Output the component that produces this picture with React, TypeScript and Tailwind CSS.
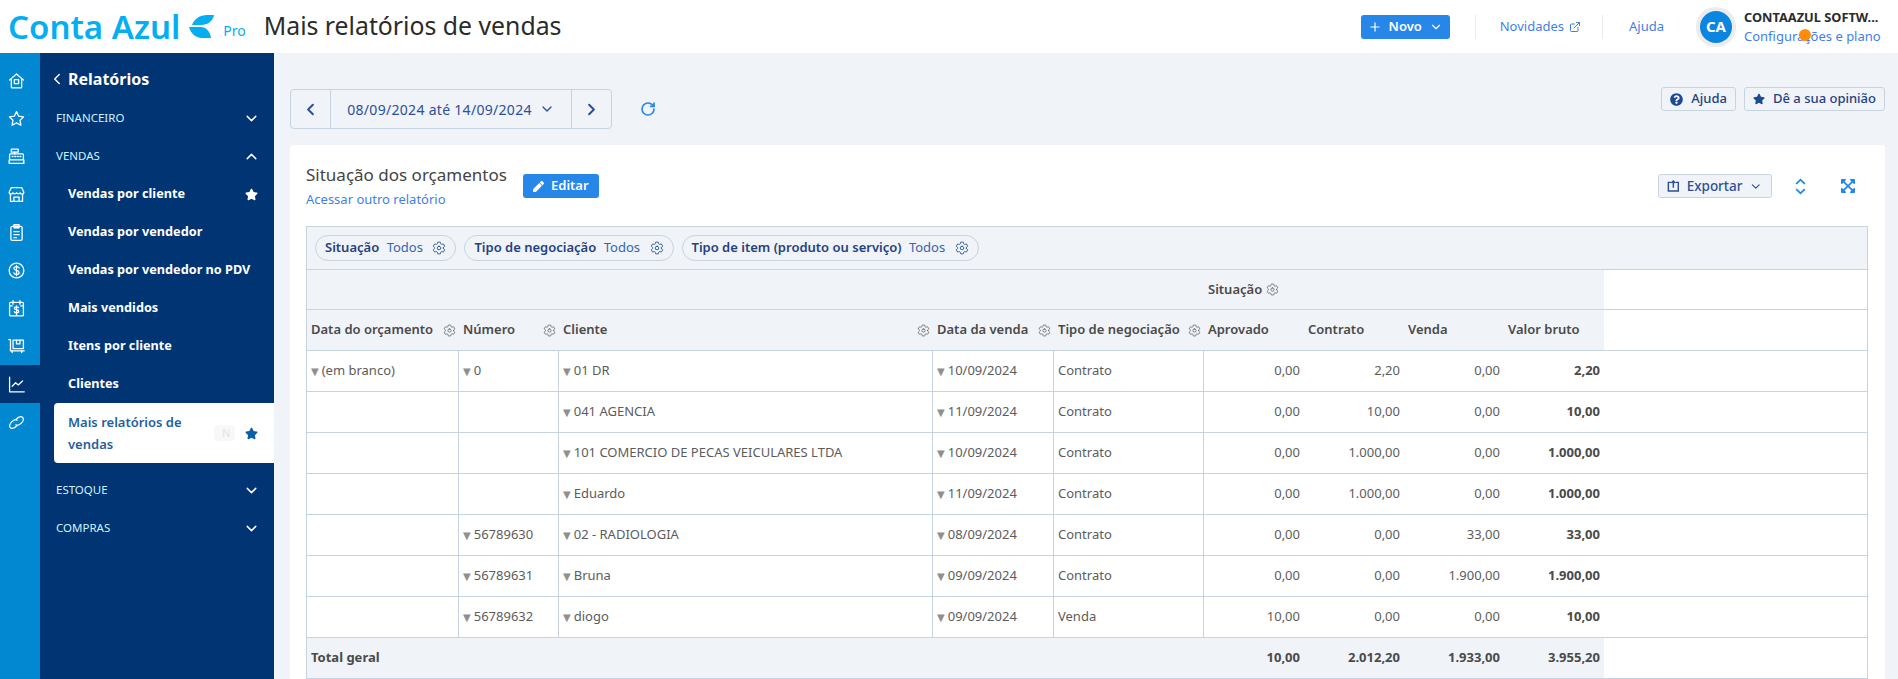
import { ChevronDown, ChevronUp, ChevronLeft, ChevronRight, Plus, RotateCw, ExternalLink } from 'lucide-react'
import { FaQuestionCircle, FaStar, FaPen, FaExpandArrowsAlt } from 'react-icons/fa'
import { IoSettingsOutline } from 'react-icons/io5'

const railIcons = [
  <g><path d="M3 10.5 11 3.5l8 7" /><path d="M5 9.5V18.5a1 1 0 0 0 1 1h10a1 1 0 0 0 1-1V9.5" /><rect x="8.5" y="10" width="5" height="4.5" /></g>,
  <path d="M11 3l2.5 5.3 5.7.8-4.1 4 1 5.7-5.1-2.7-5.1 2.7 1-5.7-4.1-4 5.7-.8z" />,
  <g><rect x="5" y="2.5" width="8" height="3.5" /><path d="M9 6v2" /><rect x="3" y="8" width="16" height="7" rx="1" /><path d="M6 11h1M9 11h1M12 11h1M15 11h1" /><path d="M2.5 15v4h17v-4" /></g>,
  <g><path d="M5 3h12l2.5 5.5a2.2 2.2 0 0 1-4.3.5 2.4 2.4 0 0 1-4.2 0 2.4 2.4 0 0 1-4.2 0 2.2 2.2 0 0 1-4.3-.5z" /><path d="M4 11v8h14v-8" /><path d="M8 19v-5h6v5" /></g>,
  <g><rect x="4.5" y="4" width="13" height="16" rx="1.5" /><rect x="8" y="2" width="6" height="3.5" /><path d="M8 10h6M8 13.5h6M8 17h3" /></g>,
  <g><circle cx="11" cy="11" r="8.5" /><path d="M14 8c-.5-1-1.500-1.500-3-1.500-1.700 0-3 .8-3 2.200 0 3 6 1.500 6 4.500 0 1.400-1.300 2.300-3 2.300-1.500 0-2.600-.6-3-1.700M11 5v12" /></g>,
  <g><rect x="3" y="4" width="16" height="15.500" rx="1" /><path d="M7 2v4M15 2v4M3 8h3M16 8h3" /><path d="M13.500 10c-.4-.7-1.300-1-2.500-1-1.400 0-2.500.6-2.500 1.700 0 2.300 5 1.100 5 3.500 0 1.100-1.100 1.800-2.500 1.800-1.200 0-2.100-.4-2.500-1.300M11 8v10" /></g>,
  <g><path d="M2 3h2v13h16" /><rect x="7" y="3.500" width="12" height="10" /><path d="M11 3.500v4.500h4V3.500" /><path d="M6 16v2M17 16v2" /></g>,
  <g><path d="M3 2.500V19.500h17" /><path d="M6 13l4-4 3 2.500 5-4.500" /></g>,
  <g><path d="M10.500 7.500C13 4.500 16 3.500 18 5c2 1.700.8 4.800-1.700 7-2.300 2-4.600 2.800-6 1.700" /><path d="M11.500 14.500C9 17.500 6 18.500 4 17c-2-1.700-.8-4.800 1.700-7 2.300-2 4.600-2.800 6-1.700" /></g>,
]

const rows = [
  { d: '(em branco)', n: '0', c: '01 DR', dv: '10/09/2024', t: 'Contrato', v: ['0,00', '2,20', '0,00', '2,20'] },
  { c: '041 AGENCIA', dv: '11/09/2024', t: 'Contrato', v: ['0,00', '10,00', '0,00', '10,00'] },
  { c: '101 COMERCIO DE PECAS VEICULARES LTDA', dv: '10/09/2024', t: 'Contrato', v: ['0,00', '1.000,00', '0,00', '1.000,00'] },
  { c: 'Eduardo', dv: '11/09/2024', t: 'Contrato', v: ['0,00', '1.000,00', '0,00', '1.000,00'] },
  { n: '56789630', c: '02 - RADIOLOGIA', dv: '08/09/2024', t: 'Contrato', v: ['0,00', '0,00', '33,00', '33,00'] },
  { n: '56789631', c: 'Bruna', dv: '09/09/2024', t: 'Contrato', v: ['0,00', '0,00', '1.900,00', '1.900,00'] },
  { n: '56789632', c: 'diogo', dv: '09/09/2024', t: 'Venda', v: ['10,00', '0,00', '0,00', '10,00'] },
]

const gridCols = 'grid grid-cols-[152px_100px_374px_121px_150px_100px_100px_100px_100px_1fr]'

function Tri() {
  return <span className="mr-[3px] text-[10px] text-[#8f8f8f] font-['DejaVu_Sans',sans-serif]">▼</span>
}

function Cell({ value, tri = true }: { value?: string; tri?: boolean }) {
  return (
    <div className="flex items-center pl-1 border-r border-[#c8d3e0] truncate">
      {value && tri && <Tri />}
      {value}
    </div>
  )
}

function HeadCell({ label }: { label: string }) {
  return (
    <div className="flex items-center justify-between pl-1 pr-[3px]">
      <span>{label}</span>
      <IoSettingsOutline size={13} className="text-[#666]" />
    </div>
  )
}

function Pill({ label }: { label: string }) {
  return (
    <div className="flex items-center h-[26px] px-[9px] gap-[7.500px] rounded-full border border-[#c8d3e0] text-[13px]">
      <span className="font-semibold text-[#24427f]">{label}</span>
      <span className="text-[#3566ae]">Todos</span>
      <IoSettingsOutline size={14} className="text-[#24518f] ml-[2px]" />
    </div>
  )
}

function NavGroup({ label, open }: { label: string; open?: boolean }) {
  return (
    <div className="flex items-center justify-between h-[38px] pl-4 pr-[14px] text-[11.5px] text-[#cdf3ff]">
      <span>{label}</span>
      {open ? <ChevronUp size={17} className="text-white" /> : <ChevronDown size={17} className="text-white" />}
    </div>
  )
}

function NavItem({ label, star }: { label: string; star?: boolean }) {
  return (
    <div className="flex items-center justify-between h-[38px] pl-7 pr-4 text-[12.7px] font-bold text-white">
      <span>{label}</span>
      {star && <FaStar size={13} />}
    </div>
  )
}

export default function App() {
  return (
    <div className="h-[679px] w-[1898px] overflow-hidden flex flex-col bg-[#f0f3f8] font-['Noto_Sans',sans-serif]">
      <header className="relative h-[53px] shrink-0 bg-white flex items-center">
        <span className="ml-2 mb-px text-[33px] leading-none font-semibold text-[#04aef1]">Conta Azul</span>
        <svg viewBox="0 0 25 23" className="ml-[9px] w-[25px] h-[23px] fill-[#04aef1]">
          <path d="M25 0C24 6 19 10 12 10H3C5 4 11 0 18 0Z" />
          <path d="M0 12H12C17 12 21 16 22 23H13C7 23 2 19 0 12Z" />
        </svg>
        <span className="ml-[9px] mt-[9px] text-[14px] leading-none text-[#04aef1]">Pro</span>
        <h1 className="ml-[18px] mb-[3px] text-[24.800px] leading-none text-[#2b2b2b]">Mais relatórios de vendas</h1>
        <button className="ml-auto flex items-center justify-center gap-[7px] w-[89px] h-6 rounded-[3px] bg-[#2687e9] text-[13px] font-semibold text-white">
          <Plus size={14} />
          Novo
          <ChevronDown size={14} />
        </button>
        <div className="ml-[25px] w-px h-6 bg-[#e8ecf1]" />
        <a className="ml-6 flex items-center gap-[5px] text-[13px] text-[#3f7fe8]">
          Novidades <ExternalLink size={12} />
        </a>
        <div className="ml-[21px] w-px h-6 bg-[#e8ecf1]" />
        <a className="ml-[26px] text-[13px] text-[#3f7fe8]">Ajuda</a>
        <div className="ml-8 flex items-center justify-center w-10 h-10 rounded-full bg-[#ececec]">
          <div className="flex items-center justify-center w-8 h-8 rounded-full bg-[#0a85e0] text-[15px] font-bold text-white">CA</div>
        </div>
        <div className="ml-2 w-[154px]">
          <div className="text-[12.800px] leading-[18px] font-bold text-[#2b2b2b] truncate">CONTAAZUL SOFTW...</div>
          <div className="text-[13px] leading-[20px] text-[#3f7fe8]">Configurações e plano</div>
        </div>
        <span className="absolute left-[1799px] top-[29px] w-3 h-3 rounded-full bg-[#ff8c0a]" />
      </header>

      <div className="flex flex-1 min-h-0">
        <aside className="w-10 shrink-0 bg-[#0288d1] pt-[8px]">
          {railIcons.map((icon, i) => (
            <div key={i} className={`flex items-center justify-center h-[38px] pr-2 ${i === 8 ? 'bg-[#003473]' : ''}`}>
              <svg viewBox="0 0 22 22" fill="none" stroke="white" strokeWidth="1.500" strokeLinejoin="round" strokeLinecap="round" className="w-[19px] h-[19px]">
                {icon}
              </svg>
            </div>
          ))}
        </aside>

        <nav className="w-[234px] shrink-0 bg-[#003473]">
          <div className="flex items-center h-[46px] pt-[6px] pl-[8px] text-white">
            <ChevronLeft size={18} />
            <span className="ml-[2px] text-[16px] font-bold">Relatórios</span>
          </div>
          <NavGroup label="FINANCEIRO" />
          <NavGroup label="VENDAS" open />
          <NavItem label="Vendas por cliente" star />
          <NavItem label="Vendas por vendedor" />
          <NavItem label="Vendas por vendedor no PDV" />
          <NavItem label="Mais vendidos" />
          <NavItem label="Itens por cliente" />
          <NavItem label="Clientes" />
          <div className="ml-[14px] flex items-center justify-between h-[60px] pl-[14px] pr-4 rounded-l bg-white text-[13px] leading-[22px] font-semibold text-[#1f5f9f]">
            <span className="w-[130px]">Mais relatórios de vendas</span>
            <span className="ml-auto mr-[10px] w-[21px] h-4 pl-2 rounded bg-[#f8f8f8] text-[11px] leading-4 font-normal text-[#e4e4e4] overflow-hidden">N</span>
            <FaStar size={13} className="text-[#0b5fa8]" />
          </div>
          <div className="h-2" />
          <NavGroup label="ESTOQUE" />
          <NavGroup label="COMPRAS" />
        </nav>

        <main className="flex-1 min-w-0 pl-4 pr-[13px] pt-[34px]">
          <div className="flex items-start justify-between h-[42px] mb-4">
            <div className="mt-[2px] flex items-center h-10 rounded border border-[#c8d3e0] text-[#2b4f9b]">
              <div className="flex items-center justify-center w-10 h-full border-r border-[#c8d3e0]">
                <ChevronLeft size={19} strokeWidth={2.5} />
              </div>
              <div className="flex items-center justify-center gap-[7px] w-[240px] h-full text-[14px] tracking-[0.3px]">
                08/09/2024 até 14/09/2024
                <ChevronDown size={16} />
              </div>
              <div className="flex items-center justify-center w-10 h-full border-l border-[#c8d3e0]">
                <ChevronRight size={19} strokeWidth={2.5} />
              </div>
              <RotateCw size={16} strokeWidth={2.5} className="absolute left-[640px] text-[#2687e9]" />
            </div>
            <div className="flex items-center gap-2">
              <button className="flex items-center gap-2 h-6 px-2 rounded-[3px] border border-[#c8d3e0] text-[13px] font-medium text-[#24427f]">
                <FaQuestionCircle size={13} className="text-[#1c4a95]" />
                Ajuda
              </button>
              <button className="flex items-center gap-2 h-6 px-2 rounded-[3px] border border-[#c8d3e0] text-[13px] font-medium text-[#24427f]">
                <FaStar size={12} className="text-[#1c4a95]" />
                Dê a sua opinião
              </button>
            </div>
          </div>

          <section className="rounded-t bg-white h-[560px] pl-4 pr-[17px]">
            <div className="flex items-start h-[81px]">
              <div className="pt-[18px]">
                <h2 className="text-[17px] leading-[24px] text-[#444]">Situação dos orçamentos</h2>
                <a className="block mt-[2px] text-[13px] leading-[20px] text-[#3f7fe8]">Acessar outro relatório</a>
              </div>
              <button className="mt-[29px] ml-4 flex items-center justify-center gap-[7px] w-[76px] h-6 rounded-[3px] bg-[#2687e9] text-[13px] font-semibold text-white">
                <FaPen size={11} />
                Editar
              </button>
              <button className="mt-[29px] ml-auto flex items-center gap-[7px] w-[114px] h-6 px-2 rounded-[3px] border border-[#c8d3e0] bg-[#f0f3f8] text-[13.500px] font-medium text-[#2b4f9b]">
                <svg viewBox="0 0 14 14" fill="none" stroke="currentColor" strokeWidth="1.600" className="w-[14px] h-[14px]">
                  <path d="M4.500 3H1.500v9.500h11V3H9.500" />
                  <path d="M7 9V1.500M4.800 3.700 7 1.500l2.200 2.200" />
                </svg>
                Exportar
                <ChevronDown size={15} />
              </button>
              <svg viewBox="0 0 14 20" fill="none" stroke="#2687e9" strokeWidth="2.200" className="mt-[33px] ml-[22px] w-[13px] h-[17px]">
                <path d="M2 7 7 2l5 5M2 13l5 5 5-5" />
              </svg>
              <FaExpandArrowsAlt size={16} className="mt-[33px] ml-[33px] mr-[12px] text-[#2687e9]" />
            </div>

            <div className="border-x border-t border-[#c8d3e0] text-[13px] text-[#5c5c5c]">
              <div className="flex items-center gap-2 h-[43px] pl-2 bg-[#f0f3f8] border-b border-[#c8d3e0]">
                <Pill label="Situação" />
                <Pill label="Tipo de negociação" />
                <Pill label="Tipo de item (produto ou serviço)" />
              </div>

              <div className={`${gridCols} h-[40px] border-b border-[#c8d3e0] font-semibold text-[#4a4a4a]`}>
                <div className="col-span-5 bg-[#f0f3f8]" />
                <div className="col-span-4 flex items-center gap-1 pl-1 bg-[#f0f3f8]">
                  Situação <IoSettingsOutline size={13} className="text-[#666]" />
                </div>
              </div>

              <div className={`${gridCols} h-[41px] border-b border-[#c8d3e0] font-semibold text-[#4a4a4a]`}>
                <div className="col-span-9 grid grid-cols-subgrid bg-[#f0f3f8]">
                  <HeadCell label="Data do orçamento" />
                  <HeadCell label="Número" />
                  <HeadCell label="Cliente" />
                  <HeadCell label="Data da venda" />
                  <HeadCell label="Tipo de negociação" />
                  {['Aprovado', 'Contrato', 'Venda', 'Valor bruto'].map(h => (
                    <div key={h} className="flex items-center pl-1">{h}</div>
                  ))}
                </div>
              </div>

              {rows.map((r, i) => (
                <div key={i} className={`${gridCols} h-[41px] border-b border-[#c8d3e0]`}>
                  <Cell value={r.d} />
                  <Cell value={r.n} />
                  <Cell value={r.c} />
                  <Cell value={r.dv} />
                  <Cell value={r.t} tri={false} />
                  {r.v.map((val, j) => (
                    <div key={j} className={`flex items-center justify-end pr-1 ${j === 3 ? 'font-bold text-[#4a4a4a]' : ''}`}>{val}</div>
                  ))}
                </div>
              ))}

              <div className={`${gridCols} h-[41px] border-b border-[#c8d3e0] font-bold text-[#4a4a4a]`}>
                <div className="col-span-9 grid grid-cols-subgrid bg-[#f0f3f8]">
                  <div className="col-span-5 flex items-center pl-1">Total geral</div>
                  {['10,00', '2.012,20', '1.933,00', '3.955,20'].map(val => (
                    <div key={val} className="flex items-center justify-end pr-1">{val}</div>
                  ))}
                </div>
              </div>
            </div>
          </section>
        </main>
      </div>
    </div>
  )
}
